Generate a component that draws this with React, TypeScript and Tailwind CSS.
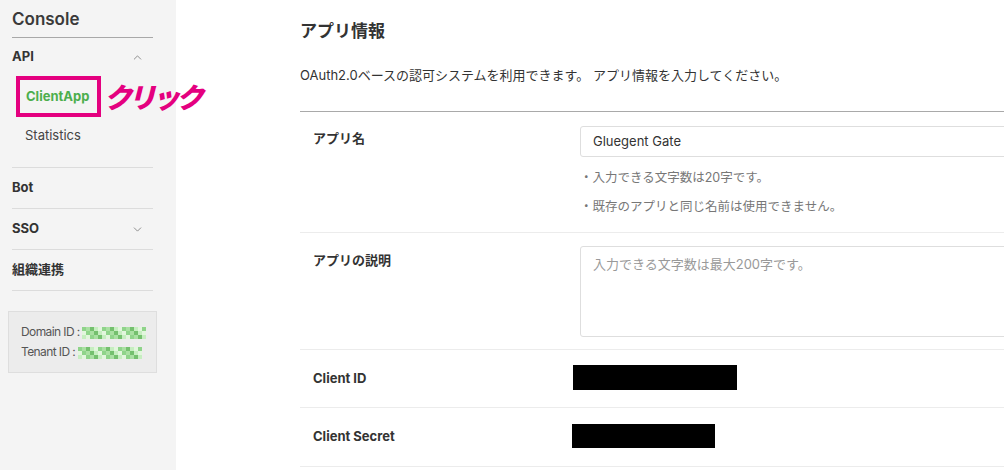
import { ChevronDown, ChevronUp } from "lucide-react";

// pixelated green blob that hides the real id
function Mosaic({ seed }: { seed: number }) {
  const cells = [];
  for (let r = 0; r < 3; r++) {
    for (let c = 0; c < 16; c++) {
      const v = (c * 7 + r * 13 + seed * 5) % 5;
      const fill = ["#8fd48a", "#c6eec0", "#a9e0a2", "#e2f6dd", "#74c06e"][v];
      cells.push(<rect key={`${r}-${c}`} x={c * 4} y={r * 4} width={4} height={4} fill={fill} />);
    }
  }
  return (
    <svg width="64" height="12" viewBox="0 0 64 12" className="inline-block align-middle">
      {cells}
    </svg>
  );
}

function Sidebar() {
  return (
    <aside className="relative w-[176px] shrink-0 bg-[#f4f4f4] h-[470px] px-3">
      <div className="pt-[7px] pb-[6px] text-[17px] leading-[24px] font-semibold text-[#3a3a3a] border-b border-[#a8a8a8] w-[141px]">
        Console
      </div>
      <div className="w-[141px]">
        <div className="flex items-center justify-between h-[38px] text-[13px] font-bold text-[#333] pr-[9px]">
          <span>API</span>
          <ChevronUp size={13} strokeWidth={1.5} className="text-[#777]" />
        </div>
        <div className="ml-[4px] w-[85px] h-[41px] border-[4px] border-[#e4007f] flex items-center pl-[6px] text-[13px] font-bold text-[#4cae4c]">
          ClientApp
        </div>
        <div className="pl-[13px] h-[38px] flex items-center text-[13px] text-[#444]">Statistics</div>
        <div className="border-b border-[#dcdcdc] h-[13px]" />
        <div className="flex items-center h-[41px] text-[13px] font-bold text-[#333] border-b border-[#dcdcdc]">Bot</div>
        <div className="flex items-center justify-between h-[41px] text-[13px] font-bold text-[#333] border-b border-[#dcdcdc] pr-[9px]">
          <span>SSO</span>
          <ChevronDown size={13} strokeWidth={1.5} className="text-[#777]" />
        </div>
        <div className="flex items-center h-[41px] text-[13px] font-semibold text-[#333] border-b border-[#dcdcdc]">組織連携</div>
      </div>
      <div className="-ml-1 mt-[20px] w-[149px] h-[62px] bg-[#ececec] border border-[#dedede] pl-[12px] pt-[10px] text-[12px] leading-[20px] text-[#555] tracking-[-0.6px]">
        <div>Domain ID : <Mosaic seed={1} /></div>
        <div>Tenant ID : <Mosaic seed={3} /></div>
      </div>
      <div className="absolute left-[104px] top-[84px] text-[28px] leading-none font-black italic text-[#e4007f] tracking-[-4px] whitespace-nowrap">
        クリック
      </div>
    </aside>
  );
}

function Row({ label, children, className }: { label: string; children: React.ReactNode; className: string }) {
  return (
    <div className={`flex border-b border-[#ececec] ${className}`}>
      <div className="w-[280px] shrink-0 pl-[13px] text-[13px] font-bold text-[#333]">{label}</div>
      <div className="flex-1">{children}</div>
    </div>
  );
}

export default function App() {
  return (
    <div
      className="flex w-[1004px] h-[470px] overflow-hidden bg-white"
      style={{ fontFamily: '"Inter", "Noto Sans CJK JP", sans-serif' }}
    >
      <Sidebar />
      <main className="flex-1 pl-[124px] overflow-hidden">
        <h1 className="pt-[20px] text-[17px] font-bold text-[#333] leading-[22px]">アプリ情報</h1>
        <p className="mt-[24px] text-[13px] text-[#333] leading-[18px]">
          OAuth2.0ベースの認可システムを利用できます。 アプリ情報を入力してください。
        </p>
        <div className="mt-[27px] border-t border-[#a9a9a9] w-[720px]">
          <Row label="アプリ名" className="h-[121px] pt-[17px]">
            <div className="-mt-[3px] h-[31px] w-[440px] border border-[#dedede] rounded-[3px] flex items-center pl-[12px] text-[13px] text-[#333]">
              Gluegent Gate
            </div>
            <div className="mt-[12px] text-[12.5px] text-[#777] leading-[17px]">・入力できる文字数は20字です。</div>
            <div className="mt-[12px] text-[12.5px] text-[#777] leading-[17px]">・既存のアプリと同じ名前は使用できません。</div>
          </Row>
          <Row label="アプリの説明" className="h-[117px] pt-[18px]">
            <div className="-mt-[5px] h-[91px] w-[440px] border border-[#dedede] rounded-[3px] pl-[12px] pt-[8px] text-[13px] text-[#999]">
              入力できる文字数は最大200字です。
            </div>
          </Row>
          <Row label="Client ID" className="h-[58px] items-center">
            <div className="-ml-[7px] mt-[-2px] w-[164px] h-[25px] bg-black" />
          </Row>
          <Row label="Client Secret" className="h-[59px] items-center">
            <div className="-ml-[8px] mt-[-2px] w-[143px] h-[24px] bg-black" />
          </Row>
        </div>
      </main>
    </div>
  );
}
